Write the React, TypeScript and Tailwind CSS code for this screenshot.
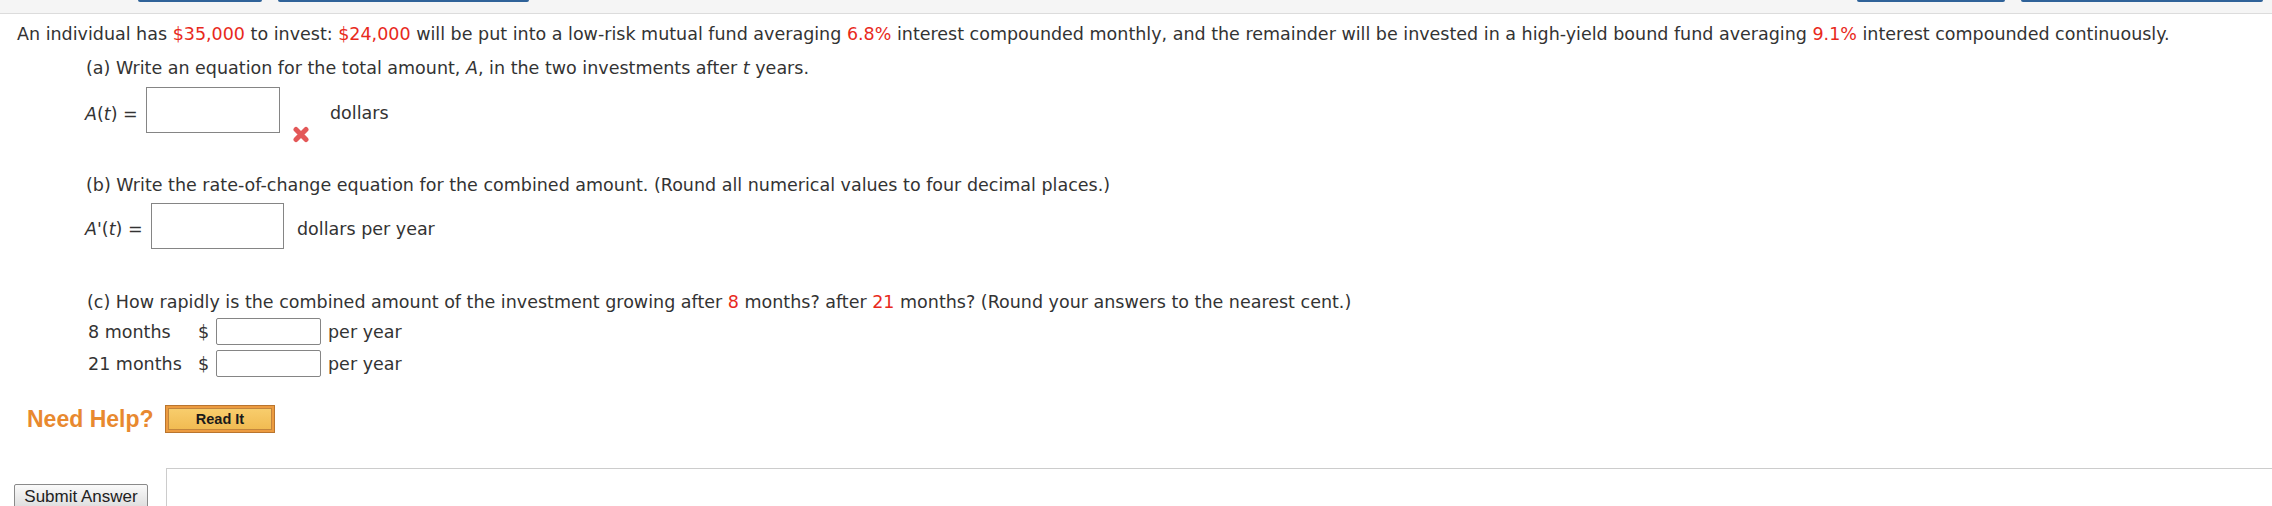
import React from "react";

const Red = ({ children }: { children: React.ReactNode }) => (
  <span className="text-[#e8291c]">{children}</span>
);

function WrongMark() {
  return (
    <svg width="18" height="17" viewBox="0 0 18 17" className="block">
      <path d="M4 3.5 L14 13.5 M14 3.5 L4 13.5" stroke="#e35858" strokeWidth="5" strokeLinecap="round" />
    </svg>
  );
}

export default function App() {
  return (
    <div className="w-[2272px] h-[506px] overflow-hidden bg-white font-['DejaVu_Sans',Verdana,sans-serif] text-[17.5px] leading-[20px] text-[#333]">
      {/* top bar */}
      <div className="h-[14px] bg-[#f5f5f5] border-b border-[#dcdcdc] flex items-start">
        <div className="ml-[138px] w-[124px] h-[2px] bg-[#2f6299] rounded-b-[2px]" />
        <div className="ml-[16px] w-[251px] h-[2px] bg-[#2f6299] rounded-b-[2px]" />
        <div className="flex-1" />
        <div className="w-[148px] h-[2px] bg-[#2f6299] rounded-b-[2px]" />
        <div className="ml-[16px] w-[242px] h-[2px] bg-[#2f6299] rounded-b-[2px]" />
        <div className="w-[9px]" />
      </div>

      <p className="mt-[10px] pl-[17px] whitespace-nowrap">
        An individual has <Red>$35,000</Red> to invest: <Red>$24,000</Red> will be put into a low-risk mutual fund averaging{" "}
        <Red>6.8%</Red> interest compounded monthly, and the remainder will be invested in a high-yield bound fund averaging{" "}
        <Red>9.1%</Red> interest compounded continuously.
      </p>

      {/* part a */}
      <p className="mt-[14px] pl-[86px] whitespace-nowrap">
        (a) Write an equation for the total amount, <i>A</i>, in the two investments after <i>t</i> years.
      </p>
      <div className="mt-[9px] pl-[85px] flex items-start h-[56px]">
        <span className="w-[61px] mt-[17px] whitespace-nowrap">
          <i>A</i>(<i>t</i>) =
        </span>
        <div className="w-[134px] h-[46px] border border-[#858585] bg-white" />
        <div className="ml-[12px] mt-[39px]">
          <WrongMark />
        </div>
        <span className="ml-[20px] mt-[16px]">dollars</span>
      </div>

      {/* part b */}
      <p className="mt-[32px] pl-[86px] whitespace-nowrap">
        (b) Write the rate-of-change equation for the combined amount. (Round all numerical values to four decimal places.)
      </p>
      <div className="mt-[8px] pl-[85px] flex items-start h-[46px]">
        <span className="w-[66px] mt-[16px] whitespace-nowrap">
          <i>A</i>'(<i>t</i>) =
        </span>
        <div className="w-[133px] h-[46px] border border-[#858585] bg-white" />
        <span className="ml-[13px] mt-[16px] whitespace-nowrap">dollars per year</span>
      </div>

      {/* part c */}
      <p className="mt-[43px] pl-[87px] whitespace-nowrap">
        (c) How rapidly is the combined amount of the investment growing after <Red>8</Red> months? after <Red>21</Red> months? (Round your answers to the nearest cent.)
      </p>
      <div className="mt-[6px] pl-[88px] flex items-center h-[27px]">
        <span className="w-[110px] whitespace-nowrap">8 months</span>
        <span className="w-[18px]">$</span>
        <div className="w-[105px] h-[27px] border border-[#858585] rounded-[2px] bg-white" />
        <span className="ml-[7px] whitespace-nowrap">per year</span>
      </div>
      <div className="mt-[5px] pl-[88px] flex items-center h-[27px]">
        <span className="w-[110px] whitespace-nowrap">21 months</span>
        <span className="w-[18px]">$</span>
        <div className="w-[105px] h-[27px] border border-[#858585] rounded-[2px] bg-white" />
        <span className="ml-[7px] whitespace-nowrap">per year</span>
      </div>

      {/* need help */}
      <div className="mt-[28px] pl-[27px] flex items-center h-[28px]">
        <span className="w-[138px] shrink-0 font-['Liberation_Sans',Arial,sans-serif] font-bold text-[23px] leading-[28px] text-[#e8892f] whitespace-nowrap">
          Need Help?
        </span>
        <div className="w-[110px] h-[28px] shrink-0 border border-[#b9752e] bg-[#ec9b40] p-[2px]">
          <div className="w-full h-full border border-[#c3853c] bg-gradient-to-b from-[#f8cd6c] to-[#f1bb52] flex items-center justify-center">
            <span className="font-['Liberation_Sans',Arial,sans-serif] font-bold text-[14.5px] leading-[16px] text-[#1a1a1a]">
              Read It
            </span>
          </div>
        </div>
      </div>

      {/* submit */}
      <div className="mt-[35px] flex items-start">
        <button className="ml-[14px] mt-[16px] w-[134px] shrink-0 border border-[#8a8a8a] rounded-[2px] bg-gradient-to-b from-[#fafafa] to-[#dcdcdc] py-[2px] font-['Liberation_Sans',Arial,sans-serif] text-[17px] leading-[20px] text-[#222] whitespace-nowrap">
          Submit Answer
        </button>
        <div className="ml-[18px] w-[2200px] shrink-0 h-[80px] border border-[#cccccc]" />
      </div>
    </div>
  );
}
